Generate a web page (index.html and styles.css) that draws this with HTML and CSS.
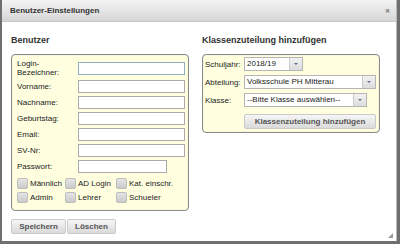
FILE: index.html
```html
<!DOCTYPE html>
<html lang="de">
<head>
<meta charset="UTF-8">
<title>Benutzer-Einstellungen</title>
<link rel="stylesheet" href="styles.css">
</head>
<body>

<div class="dialog">
    <div class="titlebar">
        <span class="title">Benutzer-Einstellungen</span>
        <span class="close">&#10006;</span>
    </div>

    <div class="content">
        <div class="column">
            <h2>Benutzer</h2>
            <div class="box">
                <div class="form">
                    <label>Login-<br>Bezeichner:</label><input type="text" class="focus">
                    <label>Vorname:</label><input type="text">
                    <label>Nachname:</label><input type="text">
                    <label>Geburtstag:</label><input type="text">
                    <label>Email:</label><input type="text">
                    <label>SV-Nr:</label><input type="text">
                    <label>Passwort:</label><input type="password" class="short">
                </div>
                <div class="checks">
                    <span class="check"><i></i>Männlich</span>
                    <span class="check"><i></i>AD Login</span>
                    <span class="check"><i></i>Kat. einschr.</span>
                    <span class="check"><i></i>Admin</span>
                    <span class="check"><i></i>Lehrer</span>
                    <span class="check"><i></i>Schueler</span>
                </div>
            </div>
            <div class="actions">
                <button class="btn">Speichern</button>
                <button class="btn">Löschen</button>
            </div>
        </div>

        <div class="column">
            <h2>Klassenzuteilung hinzufügen</h2>
            <div class="box box-right">
                <div class="form form-right">
                    <label>Schuljahr:</label>
                    <div class="select s-year"><span>2018/19</span><b></b></div>
                    <label>Abteilung:</label>
                    <div class="select s-wide"><span>Volksschule PH Mitterau</span><b></b></div>
                    <label>Klasse:</label>
                    <div class="select s-class"><span>--Bitte Klasse auswählen--</span><b></b></div>
                    <span></span>
                    <button class="btn btn-add">Klassenzuteilung hinzufügen</button>
                </div>
            </div>
        </div>
    </div>

    <span class="grip"></span>
</div>

</body>
</html>
```

FILE: styles.css
```css
body {
    margin: 0;
    padding: 0;
    background: #6f6f6f;
    font-family: "Liberation Sans", Arial, sans-serif;
    color: #222;
}

.dialog {
    position: relative;
    width: 395px;
    height: 241px;
    margin-left: 2px;
    background: #fff;
    border-right: 1px solid #bbb;
    box-sizing: border-box;
}

.titlebar {
    height: 22px;
    display: flex;
    align-items: center;
    justify-content: space-between;
    padding: 0 6px 0 8px;
    background: linear-gradient(#f4f4f4, #d6d6d6);
    border-bottom: 1px solid #c8c8c8;
    box-sizing: border-box;
}

.title {
    font-size: 8px;
    font-weight: bold;
    color: #333;
}

.close {
    font-size: 6px;
    color: #8a8a8a;
}

.content {
    display: flex;
    gap: 13px;
    padding: 0 9px;
}

.column {
    width: 178px;
}

h2 {
    margin: 13px 0 8px 0;
    font-size: 9px;
    line-height: 11px;
    color: #333;
}

.box {
    background: #ffffe0;
    border: 1px solid #8a8a8a;
    border-radius: 4px;
    padding: 4px 4px 7px 5px;
    box-sizing: border-box;
    box-shadow: inset 0 0 1px #bbb;
}

.form {
    display: grid;
    grid-template-columns: 61px 107px;
    row-gap: 3px;
    align-items: center;
}

label {
    font-size: 8px;
    line-height: 9px;
    color: #222;
}

input {
    width: 107px;
    height: 13px;
    margin: 0;
    padding: 0;
    border: 1px solid #aaa;
    box-sizing: border-box;
    background: #fff;
}

input.focus {
    border-color: #8fb0c4;
}

input.short {
    width: 89px;
}

.checks {
    display: grid;
    grid-template-columns: 48px 51px auto;
    row-gap: 3px;
    margin-top: 5px;
}

.check {
    display: flex;
    align-items: center;
    gap: 2px;
    font-size: 8px;
    line-height: 10px;
    color: #222;
}

.check i {
    width: 9px;
    height: 9px;
    border: 1px solid #bdbdbd;
    border-radius: 2px;
    background: linear-gradient(#e6e6e6, #c9c9c9);
}

.actions {
    display: flex;
    gap: 1px;
    margin-top: 8px;
}

.btn {
    height: 15px;
    padding: 0 4px;
    margin: 0;
    border: 1px solid #cacaca;
    border-radius: 2px;
    background: linear-gradient(#f6f6f6, #dadada);
    font-family: "Liberation Sans", Arial, sans-serif;
    font-size: 8px;
    font-weight: bold;
    color: #555;
}

.actions .btn:first-child {
    width: 55px;
}

.actions .btn:last-child {
    width: 49px;
}

.box-right {
    padding: 2px 3px 3px 2px;
}

.form-right {
    grid-template-columns: 39px auto;
    row-gap: 4px;
}

.select {
    display: flex;
    height: 14px;
    border: 1px solid #b5b5b5;
    background: #fff;
    box-sizing: border-box;
}

.select span {
    flex: 1;
    font-size: 8px;
    line-height: 12px;
    padding-left: 2px;
    color: #222;
    white-space: nowrap;
    overflow: hidden;
}

.select b {
    position: relative;
    width: 12px;
    background: linear-gradient(#f2f2f2, #dcdcdc);
    border-left: 1px solid #ccc;
}

.select b::after {
    content: "";
    position: absolute;
    left: 4px;
    top: 5px;
    border-left: 2px solid transparent;
    border-right: 2px solid transparent;
    border-top: 2px solid #5a6e8a;
}

.s-year {
    width: 59px;
}

.s-wide {
    width: 132px;
}

.s-class {
    width: 123px;
}

.btn-add {
    width: 132px;
    margin-top: 3px;
}

.grip {
    position: absolute;
    right: 3px;
    bottom: 3px;
    width: 0;
    height: 0;
    border-left: 5px solid transparent;
    border-bottom: 5px solid #999;
}
```
